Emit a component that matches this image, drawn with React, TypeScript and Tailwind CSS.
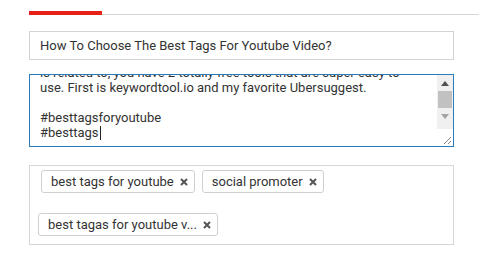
import React from "react";

const font = { fontFamily: "Roboto, 'Noto Sans', sans-serif" };

function Tag({ label, className = "" }: { label: string; className?: string }) {
  return (
    <div
      className={`flex h-[23px] items-center rounded-[3px] border border-[#cfcfcf] bg-white pl-[9px] pr-[6px] text-[13px] text-[#333] ${className}`}
    >
      <span className="whitespace-nowrap">{label}</span>
      <svg width="8" height="8" viewBox="0 0 8 8" className="ml-[6px]">
        <path d="M1 1 L7 7 M7 1 L1 7" stroke="#555" strokeWidth="2" strokeLinecap="butt" />
      </svg>
    </div>
  );
}

export default function App() {
  return (
    <div className="h-[263px] w-[479px] overflow-hidden bg-white" style={font}>
      <div className="flex items-end pt-[11px] pl-[29px]">
        <div className="h-[4px] w-[73px] bg-[#e62117]" />
        <div className="h-px flex-1 bg-[#d6d6d6]" />
      </div>

      <div className="pl-[29px] pr-[25px]">
        <div className="mt-[16px] flex h-[29px] items-center border border-[#d3d3d3] px-[10px] text-[13px] text-[#333]">
          How To Choose The Best Tags For Youtube Video?
        </div>

        <div className="mt-[14px] flex h-[73px] border border-[#2c7ab8] bg-white">
          <div className="flex-1 overflow-hidden pl-[10px] text-[13px] leading-[15px] text-[#333]">
            <div className="-mt-[10px]">is related to, you have 2 totally free tools that are super easy to</div>
            <div>use. First is keywordtool.io and my favorite Ubersuggest.</div>
            <div className="h-[15px]" />
            <div>#besttagsforyoutube</div>
            <div className="flex items-center">
              #besttags<span className="ml-px inline-block h-[14px] w-px bg-[#222]" />
            </div>
          </div>
          <div className="flex w-[16px] flex-col bg-[#f0f0f0]">
            <div className="flex h-[16px] items-center justify-center">
              <svg width="8" height="5" viewBox="0 0 8 5">
                <path d="M0 5 L4 0 L8 5 Z" fill="#505050" />
              </svg>
            </div>
            <div className="mx-auto h-[17px] w-[14px] bg-[#c1c1c1]" />
            <div className="flex h-[16px] items-center justify-center">
              <svg width="8" height="5" viewBox="0 0 8 5">
                <path d="M0 0 L8 0 L4 5 Z" fill="#a3a3a3" />
              </svg>
            </div>
            <div className="flex-1" />
            <div className="flex h-[17px] items-end justify-end bg-white pb-[1px] pr-[1px]">
              <svg width="9" height="9" viewBox="0 0 9 9">
                <path d="M1 8 L8 1 M5 8 L8 5" stroke="#888" strokeWidth="1" />
              </svg>
            </div>
          </div>
        </div>

        <div className="mt-[18px] h-[80px] border border-[#d6d6d6] pl-[8px] pt-[4px]">
          <div className="flex gap-[7px] pl-[3px]">
            <Tag label="best tags for youtube" />
            <Tag label="social promoter" />
          </div>
          <div className="mt-[20px] flex">
            <Tag label="best tagas for youtube v..." />
          </div>
        </div>
      </div>
    </div>
  );
}
